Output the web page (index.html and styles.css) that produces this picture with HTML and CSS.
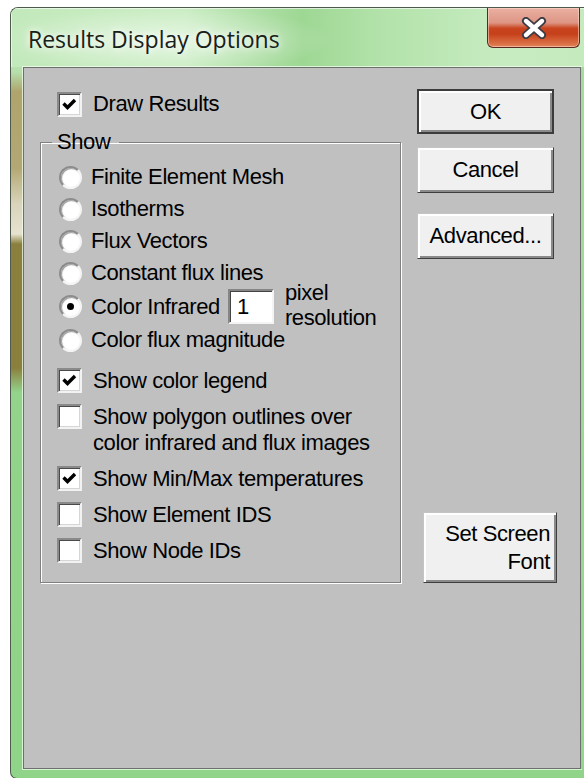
FILE: index.html
```html
<!DOCTYPE html>
<html lang="en">
<head>
<meta charset="utf-8">
<title>Results Display Options</title>
<link rel="stylesheet" href="styles.css">
</head>
<body>
<div class="window">
  <div class="titlebar">
    <span class="title">Results Display Options</span>
    <button class="close" type="button" aria-label="Close">
      <svg width="26" height="22" viewBox="0 0 26 22">
        <path d="M5 4 L21 18 M21 4 L5 18" stroke="#3c3c44" stroke-width="8" stroke-linecap="round"/>
        <path d="M5 4 L21 18 M21 4 L5 18" stroke="#ffffff" stroke-width="4.4" stroke-linecap="round"/>
      </svg>
    </button>
  </div>
  <div class="frame-body">
    <div class="client">
      <div class="main">
        <div class="row draw">
          <span class="check on"><svg viewBox="0 0 21 21"><path d="M4.5 9.5 L8.5 13.5 L16 6" fill="none" stroke="#000" stroke-width="3.4"/></svg></span>
          <span>Draw Results</span>
        </div>
        <fieldset class="group">
          <legend>Show</legend>
          <div class="row radio-row"><span class="radio"></span><span>Finite Element Mesh</span></div>
          <div class="row radio-row"><span class="radio"></span><span>Isotherms</span></div>
          <div class="row radio-row"><span class="radio"></span><span>Flux Vectors</span></div>
          <div class="row radio-row"><span class="radio"></span><span>Constant flux lines</span></div>
          <div class="row radio-row infrared">
            <span class="radio on"></span><span>Color Infrared</span>
            <span class="textbox">1</span>
            <span class="unit">pixel<br>resolution</span>
          </div>
          <div class="row radio-row"><span class="radio"></span><span>Color flux magnitude</span></div>

          <div class="checks">
            <div class="row check-row">
              <span class="check on"><svg viewBox="0 0 21 21"><path d="M4.5 9.5 L8.5 13.5 L16 6" fill="none" stroke="#000" stroke-width="3.4"/></svg></span>
              <span>Show color legend</span>
            </div>
            <div class="row check-row">
              <span class="check"></span>
              <span>Show polygon outlines over<br>color infrared and flux images</span>
            </div>
            <div class="row check-row">
              <span class="check on"><svg viewBox="0 0 21 21"><path d="M4.5 9.5 L8.5 13.5 L16 6" fill="none" stroke="#000" stroke-width="3.4"/></svg></span>
              <span>Show Min/Max temperatures</span>
            </div>
            <div class="row check-row">
              <span class="check"></span>
              <span>Show Element IDS</span>
            </div>
            <div class="row check-row">
              <span class="check"></span>
              <span>Show Node IDs</span>
            </div>
          </div>
        </fieldset>
      </div>
      <div class="side">
        <button class="btn default" type="button">OK</button>
        <button class="btn cancel" type="button">Cancel</button>
        <button class="btn advanced" type="button">Advanced...</button>
        <button class="btn font-btn" type="button">Set Screen<br>Font</button>
      </div>
    </div>
    <div class="frame-right"></div>
  </div>
</div>
</body>
</html>
```

FILE: styles.css
```css
html, body {
  margin: 0;
  background: #ffffff;
  overflow: hidden;
}

body {
  font-family: "Liberation Sans", Arial, sans-serif;
  font-size: 22px;
  letter-spacing: -0.4px;
  color: #000;
}

/* ---------- window frame ---------- */
.window {
  box-sizing: border-box;
  margin: 7px 0 0 10px;
  width: 584px;
  height: 772px;
  border: 1px solid #4e5a4c;
  border-right: none;
  border-radius: 8px 0 0 7px;
  display: flex;
  flex-direction: column;
  overflow: hidden;
  background: linear-gradient(to bottom,
    #c6eabf 0px,
    #b6dfac 64px,
    #aea46c 84px,
    #b3a874 160px,
    #d9d4bb 196px,
    #e6e2cf 226px,
    #8b7f3d 236px,
    #8b7f3d 360px,
    #93d38b 384px,
    #8fd488 100%);
}

.titlebar {
  height: 59px;
  flex: none;
  display: flex;
  align-items: flex-start;
  background:
    radial-gradient(ellipse 170px 34px at 150px 32px, rgba(255,255,255,0.55), rgba(255,255,255,0) 100%),
    linear-gradient(to right, #c2e9bb 0%, #c8ecc1 30%, #9ed794 50%, #b2e2a9 63%, #c8ecc2 85%, #c4eabd 100%);
  box-shadow: inset 1px 1px 0 rgba(255,255,255,0.6);
}

.title {
  margin: 16px 0 0 17px;
  font-family: "Open Sans", "Noto Sans", sans-serif;
  font-size: 23px;
  letter-spacing: 0;
  line-height: 30px;
  color: #18201a;
  text-shadow: 0 0 6px rgba(255,255,255,0.9), 0 0 12px rgba(255,255,255,0.7);
}

.close {
  margin: -1px 14px 0 auto;
  width: 93px;
  height: 41px;
  padding: 0;
  display: flex;
  align-items: center;
  justify-content: center;
  border: 1px solid #5a2a20;
  border-top-color: #6a3a30;
  border-radius: 0 0 6px 6px;
  background: linear-gradient(to bottom,
    #eab0a2 0%,
    #de9584 38%,
    #c9451f 52%,
    #c6401a 66%,
    #d8693f 88%,
    #e28358 100%);
  box-shadow: inset 0 0 0 1px rgba(255,220,210,0.55);
}

.close svg {
  display: block;
}

.frame-body {
  display: flex;
  height: 702px;
  flex: none;
  margin-left: 12px;
}

.frame-right {
  flex: 1;
  background: linear-gradient(to bottom, #a5dd9d, #92d68b);
}

/* ---------- client area ---------- */
.client {
  box-sizing: border-box;
  width: 558px;
  height: 702px;
  flex: none;
  display: flex;
  align-items: flex-start;
  background: #c0c0c0;
  border: 1px solid #6c6f6b;
  box-shadow: 0 0 0 1px rgba(240,255,238,0.75);
}

.main {
  width: 361px;
  padding: 18px 0 0 16px;
  flex: none;
}

.row {
  display: flex;
  align-items: center;
  gap: 11px;
  white-space: nowrap;
}

.draw {
  height: 36px;
  padding-left: 17px;
}

/* check box */
.check {
  box-sizing: border-box;
  width: 25px;
  height: 25px;
  flex: none;
  background: #ffffff;
  border: 2px solid;
  border-color: #8a8a8a #f2f2f2 #f2f2f2 #8a8a8a;
  box-shadow: inset 1px 1px 0 #4a4a4a, inset -1px -1px 0 #d6d6d6;
}

.check svg {
  display: block;
  width: 21px;
  height: 21px;
}

/* radio button */
.radio {
  box-sizing: border-box;
  width: 23px;
  height: 23px;
  flex: none;
  margin-left: 2px;
  margin-right: 0;
  border-radius: 50%;
  background: #ffffff;
  border: 2px solid;
  border-color: #8c8c8c #f4f4f4 #f4f4f4 #8c8c8c;
  box-shadow: inset 1px 1px 1px #9a9a9a;
  display: flex;
  align-items: center;
  justify-content: center;
}

.radio-row {
  height: 32px;
  padding-left: 5px;
}

.radio-row .radio + span {
  margin-left: -2px;
}

.radio.on::after {
  content: "";
  width: 7px;
  height: 7px;
  border-radius: 50%;
  background: #000;
}

/* group box */
.group {
  box-sizing: border-box;
  width: 361px;
  margin: 8px 0 0;
  padding: 7px 10px 13px 11px;
  min-inline-size: 0;
  border: 1px solid #808080;
  box-shadow: inset 1px 1px 0 #ffffff, 1px 1px 0 #ffffff;
}

.group legend {
  padding: 0 9px 0 5px;
  line-height: 24px;
  margin-left: 0;
}

.infrared {
  height: 35px;
}

.textbox {
  box-sizing: border-box;
  width: 46px;
  height: 35px;
  margin-left: -3px;
  padding: 2px 0 0 7px;
  background: #ffffff;
  border: 2px solid;
  border-color: #858585 #f4f4f4 #f4f4f4 #858585;
  box-shadow: inset 1px 1px 0 #444;
  line-height: 27px;
}

.unit {
  margin-left: 0;
  line-height: 25px;
  margin-top: -4px;
}

.checks {
  margin-top: 7px;
}

.check-row {
  align-items: flex-start;
  padding: 5px 0 5px 5px;
  line-height: 26px;
}

.check-row .check {
  margin-top: 0;
}

/* ---------- push buttons ---------- */
.side {
  display: flex;
  flex-direction: column;
  align-items: flex-start;
  margin-left: 16px;
  padding-top: 21px;
}

.btn {
  box-sizing: border-box;
  width: 137px;
  height: 46px;
  padding: 0;
  font-family: "Liberation Sans", Arial, sans-serif;
  font-size: 22px;
  letter-spacing: -0.4px;
  color: #000;
  background: #f0f0f0;
  border: 1px solid;
  border-color: #c4c4c4 #3e3e3e #3e3e3e #c4c4c4;
  box-shadow: inset 2px 2px 0 #ffffff, inset -2px -2px 0 #8a8a8a;
}

.btn.default {
  height: 45px;
  border: 2px solid #3c3c3c;
  box-shadow: inset 2px 2px 0 #ffffff, inset -2px -2px 0 #8a8a8a;
}

.cancel {
  margin-top: 13px;
}

.advanced {
  margin-top: 20px;
}

.font-btn {
  margin: 253px 0 0 6px;
  width: 134px;
  height: 71px;
  text-align: right;
  padding-right: 6px;
  line-height: 28px;
}
```
